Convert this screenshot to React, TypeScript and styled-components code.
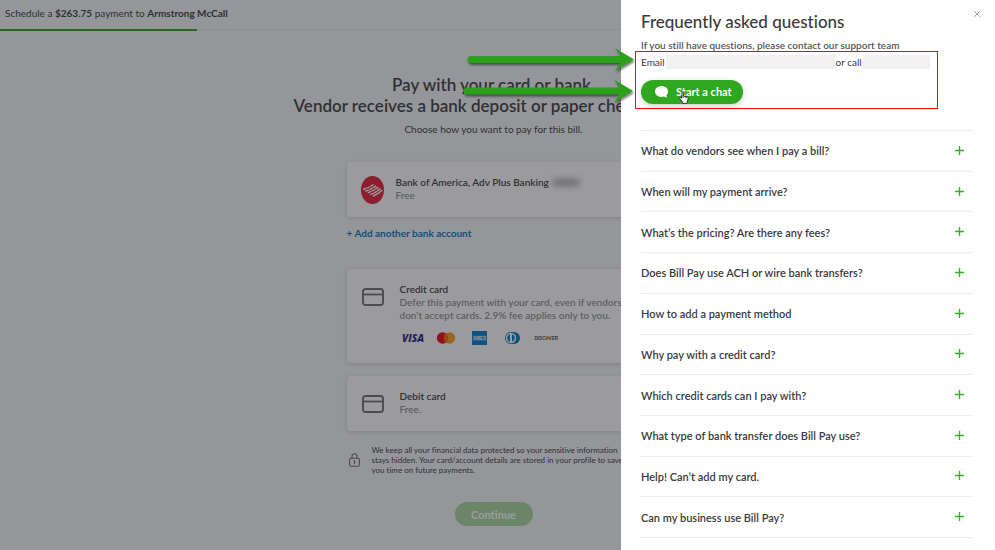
import React from "react";
import styled, { createGlobalStyle } from "styled-components";

const GlobalStyle = createGlobalStyle`
  * { box-sizing: border-box; }
  html, body, #root { height: 100%; }
  body {
    margin: 0;
    overflow: hidden;
    background: #f4f5f8;
    color: #393a3d;
    font-family: Lato, "Liberation Sans", sans-serif;
    font-size: 10px;
    font-variant-ligatures: none;
  }
  h1, h2, h3, p, ul { margin: 0; padding: 0; }
  b { font-weight: 700; }
  button { font-family: inherit; border: 0; background: none; cursor: pointer; }
`;

const Shell = styled.div`
  position: relative;
  height: 100%;
  overflow: hidden;
`;

const Page = styled.div`
  height: 100%;
  padding-right: 8px;
`;

const TopBar = styled.header`
  height: 29px;
  padding: 0 5px;
  line-height: 27px;
`;

const Track = styled.div`
  height: 2px;
  border-top: 1px solid #e3e5e8;
`;

const TrackFill = styled.div`
  width: 20%;
  height: 2px;
  margin-top: -1px;
  background: #2ca01c;
`;

const Main = styled.main`
  display: flex;
  flex-direction: column;
  align-items: center;
  padding-top: 43px;
`;

const Title = styled.h1`
  font-size: 17px;
  line-height: 21px;
  font-weight: 600;
  text-align: center;
  white-space: nowrap;
`;

const TitleDetail = styled.span`
  display: block;
  padding-right: 52px;
`;

const Subtitle = styled.p`
  margin-top: 5px;
  line-height: 16px;
`;

const Options = styled.div`
  width: 294px;
  margin-top: 25px;
`;

const Card = styled.section<{ $gap?: number; $tall?: boolean }>`
  display: flex;
  align-items: flex-start;
  gap: ${(p) => p.$gap ?? 15}px;
  min-height: ${(p) => (p.$tall ? 94 : 55)}px;
  padding: 14px 14px 13px;
  border-radius: 4px;
  background: #fff;
  box-shadow: 0 1px 4px rgba(0, 0, 0, 0.14);
  & + & { margin-top: 13px; }
`;

const CardTitle = styled.h2`
  display: flex;
  align-items: center;
  gap: 4px;
  font-size: 10px;
  line-height: 13px;
  font-weight: 600;
  white-space: nowrap;
`;

const CardNote = styled.p`
  color: #8d9096;
  line-height: 13px;
  font-weight: 600;
  white-space: nowrap;
`;

const Masked = styled.span`
  width: 26px;
  height: 7px;
  background: #a8a8ab;
  filter: blur(3px);
`;

const AddLink = styled.a`
  display: block;
  margin: 9px 0 29px;
  line-height: 14px;
  font-weight: 700;
  color: #0077c5;
  text-decoration: none;
`;

const Brands = styled.div`
  display: flex;
  align-items: center;
  margin-top: 8px;
  height: 16px;
`;

const CardGlyph = styled.svg`
  flex: none;
  margin: 5px 1px 0 1px;
`;

const Security = styled.div`
  display: flex;
  align-items: center;
  gap: 12px;
  margin: 14px 0 0 2px;
  font-size: 8px;
  line-height: 10px;
  white-space: nowrap;
`;

const Continue = styled.button`
  width: 78px;
  height: 24px;
  margin-top: 27px;
  padding: 0;
  border-radius: 12px;
  background: #a6d6a0;
  color: #fff;
  font-size: 11px;
  font-weight: 700;
`;

const Overlay = styled.div`
  position: absolute;
  inset: 0;
  background: rgba(36, 38, 42, 0.46);
`;

const Panel = styled.aside`
  position: absolute;
  top: 0;
  right: 0;
  bottom: 0;
  display: flex;
  flex-direction: column;
  width: 374px;
  padding: 12px 23px 12px 20px;
  background: #fff;
`;

const Close = styled.button`
  position: absolute;
  top: 8px;
  right: 12px;
  display: flex;
  padding: 2px;
`;

const PanelTitle = styled.h2`
  font-size: 17px;
  line-height: 20px;
  font-weight: 500;
`;

const PanelLead = styled.p`
  margin-top: 8px;
  line-height: 11px;
  font-weight: 600;
  color: #55575b;
`;

const ContactBox = styled.div`
  width: 303px;
  height: 58px;
  margin-left: -6px;
  padding: 3px 5px;
  border: 1px solid #f00;
`;

const ContactLine = styled.p`
  display: flex;
  align-items: center;
  height: 14px;
  gap: 1px;
  line-height: 14px;
  white-space: nowrap;
`;

const Redacted = styled.span<{ $width: number }>`
  flex: 0 1 ${(p) => p.$width}px;
  height: 14px;
  background: #f1f1f1;
`;

const ChatButton = styled.button`
  display: flex;
  align-items: center;
  gap: 7px;
  height: 24px;
  margin-top: 11px;
  padding: 0 11px 1px 14px;
  border-radius: 12px;
  background: #2fa81f;
  box-shadow: 0 2px 6px rgba(0, 0, 0, 0.2);
  color: #fff;
  font-size: 11px;
  font-weight: 700;
`;

const Questions = styled.ul`
  flex: 1;
  display: grid;
  grid-auto-rows: 1fr;
  margin-top: 21px;
  border-top: 1px solid #e9eaeb;
  list-style: none;
`;

const Question = styled.li`
  display: flex;
  border-bottom: 1px solid #e9eaeb;
`;

const QuestionButton = styled.button`
  flex: 1;
  display: flex;
  align-items: center;
  justify-content: space-between;
  padding: 0 8px 0 0;
  color: #393a3d;
  font-size: 11px;
  font-weight: 600;
  text-align: left;
`;

const Annotations = styled.svg`
  position: absolute;
  top: 44px;
  right: 358px;
  filter: drop-shadow(1px 2px 1px rgba(0, 0, 0, 0.5));
  pointer-events: none;
`;

const Pointer = styled.svg`
  position: absolute;
  top: 91px;
  right: 306px;
  pointer-events: none;
`;

const questions = [
  "What do vendors see when I pay a bill?",
  "When will my payment arrive?",
  "What’s the pricing? Are there any fees?",
  "Does Bill Pay use ACH or wire bank transfers?",
  "How to add a payment method",
  "Why pay with a credit card?",
  "Which credit cards can I pay with?",
  "What type of bank transfer does Bill Pay use?",
  "Help! Can’t add my card.",
  "Can my business use Bill Pay?",
];

const BankLogo = () => (
  <svg width="23" height="28" viewBox="0 0 23 28" aria-hidden="true">
    <ellipse cx="11.5" cy="14" rx="11.5" ry="14" fill="#e31837" />
    <g fill="none" stroke="#fff" strokeWidth="1.5">
      <path d="M2 13.600Q7 12.500 12.500 8.500" />
      <path d="M4.300 15.200Q9.500 13.800 15 9.800" />
      <path d="M6.800 16.900Q12 15.300 17.300 11.200" />
      <path d="M9.300 18.600Q14.500 16.900 19.400 12.600" />
      <path d="M12 20.200Q17 18.300 21.300 14" />
    </g>
    <path d="M5 11.500 13.500 17M8 10 16.500 15.400" stroke="#e31837" strokeWidth="0.6" />
  </svg>
);

const CardIcon = () => (
  <CardGlyph width="22" height="18" viewBox="0 0 22 18" fill="none" stroke="#6b6c72" aria-hidden="true">
    <rect x="1" y="1" width="20" height="16" rx="2.5" strokeWidth="1.9" />
    <path d="M1 6.5h20" strokeWidth="1.8" />
  </CardGlyph>
);

const LockIcon = () => (
  <svg width="11" height="14" viewBox="0 0 11 14" fill="none" stroke="#6b6c72" aria-hidden="true">
    <rect x="0.6" y="5.2" width="9.8" height="8" rx="1.4" strokeWidth="1.1" />
    <path d="M3 5V3.2a2.5 2.5 0 0 1 5 0V5" strokeWidth="1.1" />
    <path d="M5.5 8.5v2.6" strokeWidth="1" />
    <circle cx="5.5" cy="8.2" r="0.9" fill="#6b6c72" stroke="none" />
  </svg>
);

const BrandLogos = () => (
  <Brands>
    <svg width="160" height="16" viewBox="0 0 160 16" role="img" aria-label="Accepted cards">
      <text x="2" y="12" fontFamily="Open Sans, sans-serif" fontSize="10" fontWeight="800" fontStyle="italic" fill="#1a1f91">VISA</text>
      <circle cx="42.500" cy="8" r="5.700" fill="#eb001b" />
      <circle cx="49.500" cy="8" r="5.700" fill="#f79e1b" />
      <path d="M46 3.500a5.700 5.700 0 0 1 0 9 5.700 5.700 0 0 1 0-9Z" fill="#ff5f00" />
      <rect x="72" y="1" width="15" height="14" fill="#0077c8" />
      <path d="M72 6.200h15M72 10.200h15" stroke="#fff" strokeOpacity="0.55" strokeWidth="0.6" />
      <text x="73" y="9.700" fontFamily="Liberation Sans, sans-serif" fontSize="4.500" fontWeight="700" fill="#fff">AMEX</text>
      <path d="M114 2a6 6 0 1 1 0 12h-3a6 6 0 0 1 0-12Z" fill="#0079be" />
      <circle cx="111" cy="8" r="5.200" fill="#fff" />
      <path d="M110 4.200v7.600a4 4 0 0 1 0-7.600ZM112 4.200v7.600a4 4 0 0 0 0-7.600Z" fill="#0079be" />
      <text x="134.500" y="9.700" fontFamily="Liberation Sans, sans-serif" fontSize="4.600" fontWeight="700" fill="#4a4a4c">DISC</text>
      <circle cx="147" cy="8.100" r="1.800" fill="#f47216" />
      <text x="148.600" y="9.700" fontFamily="Liberation Sans, sans-serif" fontSize="4.600" fontWeight="700" fill="#4a4a4c">VER</text>
    </svg>
  </Brands>
);

const PlusIcon = () => (
  <svg width="9" height="10" viewBox="0 0 9 10" stroke="#39b02a" strokeWidth="1.4" aria-hidden="true">
    <path d="M4.5 0v9M0 4.5h9" />
  </svg>
);

const ChatIcon = () => (
  <svg width="14" height="12" viewBox="0 0 14 12" fill="#fff" aria-hidden="true">
    <path d="M6.6 0C10.200 0 13 2.300 13 5.400c0 1.600-.7 3-1.800 4l.9 2.400-3.200-1.200c-.7.2-1.500.3-2.300.3C2.900 10.900 0 8.500 0 5.400S2.900 0 6.600 0Z" />
  </svg>
);

export default function App() {
  return (
    <Shell>
      <GlobalStyle />
      <Page>
        <TopBar>
          Schedule a <b>$263.75</b> payment to <b>Armstrong McCall</b>
        </TopBar>
        <Track>
          <TrackFill />
        </Track>
        <Main>
          <Title>
            Pay with your card or bank.
            <TitleDetail>Vendor receives a bank deposit or paper check</TitleDetail>
          </Title>
          <Subtitle>Choose how you want to pay for this bill.</Subtitle>
          <Options>
            <Card $gap={12}>
              <BankLogo />
              <div>
                <CardTitle>
                  Bank of America, Adv Plus Banking <Masked />
                </CardTitle>
                <CardNote>Free</CardNote>
              </div>
            </Card>
            <AddLink href="#add-bank">+ Add another bank account</AddLink>
            <Card $tall>
              <CardIcon />
              <div>
                <CardTitle>Credit card</CardTitle>
                <CardNote>
                  Defer this payment with your card, even if vendors
                  <br />
                  don't accept cards. 2.9% fee applies only to you.
                </CardNote>
                <BrandLogos />
              </div>
            </Card>
            <Card>
              <CardIcon />
              <div>
                <CardTitle>Debit card</CardTitle>
                <CardNote>Free.</CardNote>
              </div>
            </Card>
            <Security>
              <LockIcon />
              <p>
                We keep all your financial data protected so your sensitive information
                <br />
                stays hidden. Your card/account details are stored in your profile to save
                <br />
                you time on future payments.
              </p>
            </Security>
          </Options>
          <Continue type="button">Continue</Continue>
        </Main>
      </Page>
      <Overlay />
      <Panel aria-label="Frequently asked questions">
        <Close type="button" aria-label="Close">
          <svg width="8" height="8" viewBox="0 0 8 8" stroke="#a0a2a6" aria-hidden="true">
            <path d="M1 1l6 6M7 1L1 7" />
          </svg>
        </Close>
        <PanelTitle>Frequently asked questions</PanelTitle>
        <PanelLead>If you still have questions, please contact our support team</PanelLead>
        <ContactBox>
          <ContactLine>
            Email <Redacted $width={169} /> or call <Redacted $width={67} />
          </ContactLine>
          <ChatButton type="button">
            <ChatIcon />
            Start a chat
          </ChatButton>
        </ContactBox>
        <Questions>
          {questions.map((question) => (
            <Question key={question}>
              <QuestionButton type="button" aria-expanded="false">
                {question}
                <PlusIcon />
              </QuestionButton>
            </Question>
          ))}
        </Questions>
      </Panel>
      <Annotations width="176" height="64" viewBox="0 0 176 64" fill="#2ca01c" aria-hidden="true">
        <path d="M10 12H160L154 4 173 15.500 154 27 159 19H10a3.500 3.500 0 0 1 0-7Z" />
        <path d="M6 43.500H159L153 35.500 172 47 153 58.500 158 50.500H6a3.500 3.500 0 0 1 0-7Z" />
      </Annotations>
      <Pointer width="10" height="13" viewBox="0 0 10 13" fill="#fff" stroke="#222" strokeWidth="0.9" aria-hidden="true">
        <path d="M3 7V1.800c0-1.300 1.600-1.300 1.600 0V5l3.300.7c1 .2 1.400.8 1.300 1.700L8.600 10 8 12.400H4L3.300 10.600.8 7.800C.2 6.900 1.300 6.200 2 6.800Z" />
        <path d="M4.600 5v2M6.300 5.500v1.800M7.800 6v1.500" strokeWidth="0.6" />
      </Pointer>
    </Shell>
  );
}
